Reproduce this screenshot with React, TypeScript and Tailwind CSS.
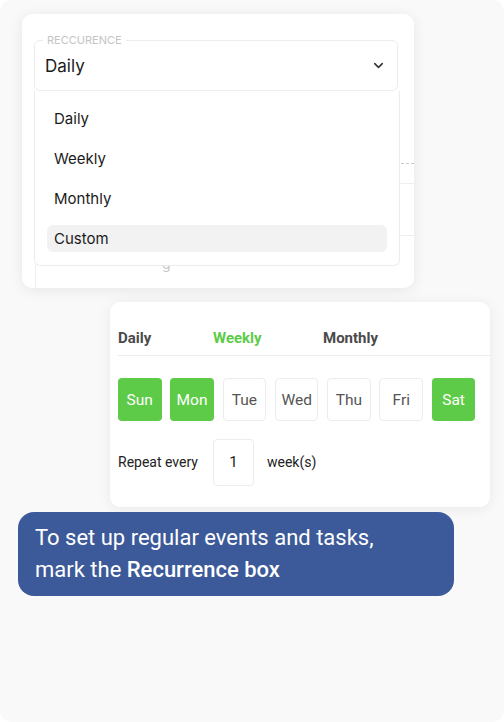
import { ChevronDown } from "lucide-react";

const days = [
  { label: "Sun", on: true },
  { label: "Mon", on: true },
  { label: "Tue", on: false },
  { label: "Wed", on: false },
  { label: "Thu", on: false },
  { label: "Fri", on: false },
  { label: "Sat", on: true },
];

function RecurrenceSelect() {
  return (
    <div className="relative ml-[22px] mt-[14px] h-[274px] w-[392px] overflow-hidden rounded-[10px] bg-white shadow-[0_2px_14px_rgba(0,0,0,0.08)] font-['Inter',sans-serif]">
      {/* select field */}
      <div className="relative ml-[12px] mt-[26px] flex h-[51px] w-[364px] items-center justify-between rounded-[6px] border border-[#ececec] pl-[10px] pr-[11px]">
        <span className="absolute -top-[8px] left-[8px] bg-white px-[4px] text-[11px] leading-[14px] text-[#c4c4c4]">
          RECCURENCE
        </span>
        <span className="mt-[2px] text-[17px] text-[#1b1b1b]">Daily</span>
        <ChevronDown className="h-[15px] w-[15px] text-[#333]" strokeWidth={2.5} />
      </div>

      {/* form behind the menu */}
      <div className="relative ml-[12px] h-[197px]">
        <div className="absolute left-[352px] right-0 top-[72px] border-t border-dashed border-[#c8c8c8]" />
        <div className="absolute left-[352px] right-0 top-[92px] border-t border-[#efefef]" />
        <div className="absolute left-[352px] right-0 top-[144px] border-t border-[#efefef]" />
        <div className="absolute bottom-0 left-[1px] top-[174px] border-l border-[#efefef]" />
        <span className="absolute left-[128px] top-[162px] text-[14px] text-[#c8c8c8]">g</span>
      </div>

      {/* open menu */}
      <div className="absolute left-[12px] top-[77px] flex h-[175px] w-[366px] flex-col gap-[13px] rounded-b-[6px] border border-t-0 border-[#ececec] bg-white px-[12px] pt-[14px]">
        {["Daily", "Weekly", "Monthly"].map((o) => (
          <div key={o} className="flex h-[27px] items-center px-[7px] pt-[2px] text-[15px] text-[#1b1b1b]">
            {o}
          </div>
        ))}
        <div className="flex h-[27px] items-center rounded-[6px] bg-[#f2f2f2] px-[7px] pt-[2px] text-[15px] text-[#1b1b1b]">
          Custom
        </div>
      </div>
    </div>
  );
}

function WeeklyCard() {
  return (
    <div className="ml-[110px] mt-[14px] h-[205px] w-[380px] rounded-[10px] bg-white pl-[8px] pt-[25px] shadow-[0_2px_14px_rgba(0,0,0,0.07)] font-['Roboto',sans-serif]">
      <div className="flex h-[28px] items-start text-[15px] font-bold text-[#4a4a4a]">
        <span className="w-[95px]">Daily</span>
        <span className="w-[110px] text-[#5dcb48]">Weekly</span>
        <span>Monthly</span>
      </div>
      <div className="border-t border-[#ececec]" />
      <div className="mt-[22px] flex gap-[8.8px]">
        {days.map((d) => (
          <div
            key={d.label}
            className={
              d.on
                ? "flex h-[43px] w-[43.5px] items-center justify-center rounded-[4px] bg-[#5dcb48] pt-[2px] text-[15.5px] text-white"
                : "flex h-[43px] w-[43.5px] items-center justify-center rounded-[4px] border border-[#ececec] pt-[2px] text-[15.5px] text-[#555]"
            }
          >
            {d.label}
          </div>
        ))}
      </div>
      <div className="mt-[18px] flex items-center text-[14px] text-[#222]">
        <span className="w-[95px]">Repeat every</span>
        <div className="flex h-[47px] w-[41px] items-center justify-center rounded-[4px] border border-[#ececec] text-[15px]">
          1
        </div>
        <span className="ml-[13px]">week(s)</span>
      </div>
    </div>
  );
}

export default function App() {
  return (
    <div className="h-[722px] w-[504px] bg-white">
      <div className="h-[722px] w-[504px] overflow-hidden rounded-[12px] bg-[#f9f9f9]">
        <RecurrenceSelect />
        <WeeklyCard />
        <div className="ml-[18px] mt-[5px] w-[436px] rounded-[16px] bg-[#3c5a99] py-[10px] pl-[17px] font-['Roboto',sans-serif] text-[22px] leading-[32px] text-white">
          To set up regular events and tasks,
          <br />
          mark the <span className="font-medium">Recurrence box</span>
        </div>
      </div>
    </div>
  );
}
